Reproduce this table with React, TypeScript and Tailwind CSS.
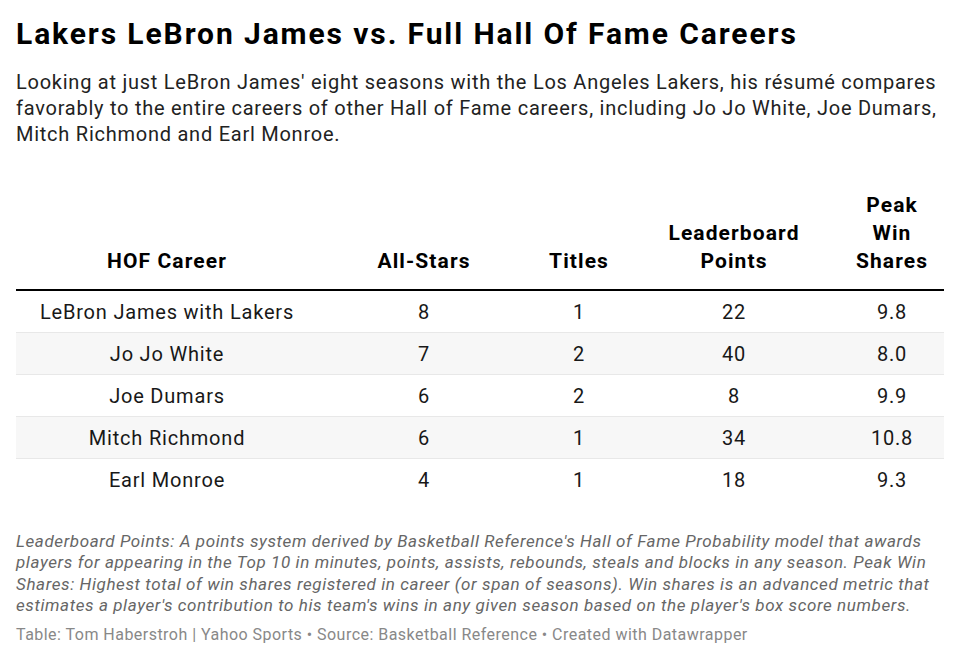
const rows = [
  { name: "LeBron James with Lakers", stars: "8", titles: "1", points: "22", ws: "9.8" },
  { name: "Jo Jo White", stars: "7", titles: "2", points: "40", ws: "8.0" },
  { name: "Joe Dumars", stars: "6", titles: "2", points: "8", ws: "9.9" },
  { name: "Mitch Richmond", stars: "6", titles: "1", points: "34", ws: "10.8" },
  { name: "Earl Monroe", stars: "4", titles: "1", points: "18", ws: "9.3" },
];

const cols = "grid grid-cols-[302px_212px_98px_212px_104px]";

export default function App() {
  return (
    <div className="w-[960px] h-[660px] bg-white text-[#181818] font-['Roboto',sans-serif] px-4 pt-[14px]">
      <h1 className="text-[30px] leading-[40px] font-bold tracking-[1.9px] text-black">
        Lakers LeBron James vs. Full Hall Of Fame Careers
      </h1>
      <p className="mt-[15px] w-[940px] text-[20px] leading-[26px] tracking-[0.75px] text-[#222]">
        Looking at just LeBron James' eight seasons with the Los Angeles Lakers, his résumé compares
        favorably to the entire careers of other Hall of Fame careers, including Jo Jo White, Joe Dumars,
        Mitch Richmond and Earl Monroe.
      </p>

      <div className="mt-[44px] w-[928px] text-[20px] tracking-[0.8px]">
        <div className={`${cols} items-end pb-[14px] border-b-2 border-black font-bold text-[21px] leading-[28px] tracking-[1.1px] text-black`}>
          <div className="text-center">HOF Career</div>
          <div className="text-center">All-Stars</div>
          <div className="text-center">Titles</div>
          <div className="text-center">Leaderboard<br />Points</div>
          <div className="text-center">Peak<br />Win<br />Shares</div>
        </div>
        {rows.map((r, i) => (
          <div
            key={r.name}
            className={`${cols} h-[42px] items-center text-center leading-none ${i % 2 === 1 ? "bg-[#f7f7f7]" : "bg-white"} ${i < rows.length - 1 ? "border-b border-[#e8e8e8]" : ""}`}
          >
            <div>{r.name}</div>
            <div>{r.stars}</div>
            <div>{r.titles}</div>
            <div>{r.points}</div>
            <div>{r.ws}</div>
          </div>
        ))}
      </div>

      <p className="mt-[30px] w-[930px] text-[17px] leading-[21.3px] italic tracking-[0.6px] text-[#666]">
        Leaderboard Points: A points system derived by Basketball Reference's Hall of Fame Probability model that awards
        players for appearing in the Top 10 in minutes, points, assists, rebounds, steals and blocks in any season. Peak Win
        Shares: Highest total of win shares registered in career (or span of seasons). Win shares is an advanced metric that
        estimates a player's contribution to his team's wins in any given season based on the player's box score numbers.
      </p>
      <p className="mt-[9px] text-[16px] leading-[20px] tracking-[0.47px] text-[#888]">
        Table: Tom Haberstroh | Yahoo Sports • Source: Basketball Reference • Created with Datawrapper
      </p>
    </div>
  );
}
